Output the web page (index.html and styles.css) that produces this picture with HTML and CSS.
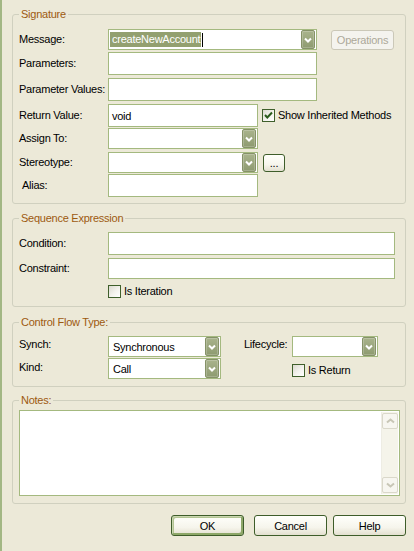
FILE: index.html
```html
<!DOCTYPE html>
<html>
<head>
<meta charset="utf-8">
<title>Message Properties</title>
<link rel="stylesheet" href="styles.css">
</head>
<body>
<div class="dialog">
  <fieldset class="group sig">
    <legend>Signature</legend>
    <div class="row">
      <span class="lbl">Message:</span>
      <div class="combo w-long"><span class="combo-text"><span class="sel">createNewAccount</span><span class="caret"></span></span><span class="ddbtn"><svg width="8" height="6" viewBox="0 0 8 6"><polyline points="1,1.5 4,4.5 7,1.5" fill="none" stroke="#fff" stroke-width="2"/></svg></span></div>
      <button class="btn btn-disabled ops">Operations</button>
    </div>
    <div class="row mt2">
      <span class="lbl">Parameters:</span>
      <div class="field w-long"></div>
    </div>
    <div class="row mt3">
      <span class="lbl">Parameter Values:</span>
      <div class="field w-long"></div>
    </div>
    <div class="row mt3">
      <span class="lbl">Return Value:</span>
      <div class="field w-mid"><span class="val">void</span></div>
      <span class="check inherit"><span class="box checked"><svg width="11" height="11" viewBox="0 0 11 11"><polyline points="2,5 4.3,7.5 9,2.5" fill="none" stroke="#2b5b1c" stroke-width="2"/></svg></span><span class="check-text">Show Inherited Methods</span></span>
    </div>
    <div class="row mt1">
      <span class="lbl">Assign To:</span>
      <div class="combo w-mid"><span class="combo-text"></span><span class="ddbtn"><svg width="8" height="6" viewBox="0 0 8 6"><polyline points="1,1.5 4,4.5 7,1.5" fill="none" stroke="#fff" stroke-width="2"/></svg></span></div>
    </div>
    <div class="row mt3">
      <span class="lbl">Stereotype:</span>
      <div class="combo w-mid"><span class="combo-text"></span><span class="ddbtn"><svg width="8" height="6" viewBox="0 0 8 6"><polyline points="1,1.5 4,4.5 7,1.5" fill="none" stroke="#fff" stroke-width="2"/></svg></span></div>
      <button class="btn dots">...</button>
    </div>
    <div class="row mt1">
      <span class="lbl lbl-indent">Alias:</span>
      <div class="field w-mid"></div>
    </div>
  </fieldset>

  <fieldset class="group seq">
    <legend>Sequence Expression</legend>
    <div class="row">
      <span class="lbl">Condition:</span>
      <div class="field w-full"></div>
    </div>
    <div class="row mt3">
      <span class="lbl">Constraint:</span>
      <div class="field w-full h21"></div>
    </div>
    <div class="row mt6">
      <span class="lbl"></span>
      <span class="check"><span class="box"></span><span class="check-text">Is Iteration</span></span>
    </div>
  </fieldset>

  <fieldset class="group flow">
    <legend>Control Flow Type:</legend>
    <div class="row row-top">
      <span class="lbl lbl-high">Synch:</span>
      <div class="combo w-short"><span class="combo-text"><span class="val">Synchronous</span></span><span class="ddbtn"><svg width="8" height="6" viewBox="0 0 8 6"><polyline points="1,1.5 4,4.5 7,1.5" fill="none" stroke="#fff" stroke-width="2"/></svg></span></div>
      <span class="lbl-life lbl-high">Lifecycle:</span>
      <div class="combo w-life"><span class="combo-text"></span><span class="ddbtn"><svg width="8" height="6" viewBox="0 0 8 6"><polyline points="1,1.5 4,4.5 7,1.5" fill="none" stroke="#fff" stroke-width="2"/></svg></span></div>
    </div>
    <div class="row row-top mt1">
      <span class="lbl lbl-kind">Kind:</span>
      <div class="combo w-short"><span class="combo-text"><span class="val">Call</span></span><span class="ddbtn"><svg width="8" height="6" viewBox="0 0 8 6"><polyline points="1,1.5 4,4.5 7,1.5" fill="none" stroke="#fff" stroke-width="2"/></svg></span></div>
      <span class="check is-return"><span class="box"></span><span class="check-text">Is Return</span></span>
    </div>
  </fieldset>

  <fieldset class="group notes">
    <legend>Notes:</legend>
    <div class="memo">
      <div class="vscroll">
        <span class="sarrow"><svg width="9" height="6" viewBox="0 0 9 6"><polyline points="1,4.5 4.5,1.5 8,4.5" fill="none" stroke="#c8c6b6" stroke-width="2"/></svg></span>
        <span class="sarrow"><svg width="9" height="6" viewBox="0 0 9 6"><polyline points="1,1.5 4.5,4.5 8,1.5" fill="none" stroke="#c8c6b6" stroke-width="2"/></svg></span>
      </div>
    </div>
  </fieldset>

  <div class="buttons">
    <button class="btn btn-default">OK</button>
    <button class="btn btn-cancel">Cancel</button>
    <button class="btn">Help</button>
  </div>
</div>
</body>
</html>
```

FILE: styles.css
```css
* { box-sizing: border-box; }
html, body { margin: 0; padding: 0; }
body {
  width: 414px;
  height: 551px;
  overflow: hidden;
  background: #ece9d8;
  border-left: 2px solid #a3b784;
  font-family: "Liberation Sans", Arial, sans-serif;
  font-size: 11px;
  letter-spacing: -0.25px;
  color: #000;
}
.dialog { padding: 8px 0 0 10px; width: 404px; }

.group {
  margin: 0;
  width: 394px;
  min-width: 0;
  border: 1px solid #d0d0bf;
  border-radius: 3px;
  padding: 8px 9px 6px 6px;
}
.group legend {
  padding: 0 2px;
  line-height: 13px;
  color: #9d5a10;
}
.seq { margin-top: 8px; padding-top: 7px; padding-bottom: 8px; }
.flow { margin-top: 9px; padding-top: 7px; padding-bottom: 7px; }
.notes { margin-top: 7px; padding-top: 3px; padding-bottom: 7px; }

.row { display: flex; align-items: center; }
.row-top { align-items: flex-start; }
.mt1 { margin-top: 1px; }
.mt2 { margin-top: 2px; }
.mt3 { margin-top: 3px; }
.mt6 { margin-top: 6px; }

.lbl { width: 89px; flex: none; white-space: nowrap; line-height: 13px; }
.lbl-indent { padding-left: 3px; }
.lbl-high { margin-top: 2px; }
.lbl-kind { margin-top: 3px; }
.lbl-life { width: 48px; margin-left: 23px; flex: none; line-height: 13px; white-space: nowrap; }

.field {
  height: 23px;
  border: 1px solid #a4b97f;
  background: #fff;
  display: flex;
  align-items: center;
  flex: none;
}
.h21 { height: 21px; }
.val { padding-left: 3px; white-space: nowrap; }

.w-long { width: 209px; }
.w-mid { width: 150px; }
.w-full { width: 287px; }
.w-short { width: 113px; }
.w-life { width: 86px; }

.combo {
  height: 21px;
  border: 1px solid #a4b97f;
  background: #fff;
  display: flex;
  align-items: stretch;
  flex: none;
}
.combo-text { flex: 1; display: flex; align-items: center; min-width: 0; padding-left: 1px; }
.combo-text .val { padding-left: 3px; }
.sel {
  background: #93a070;
  color: #fff;
  line-height: 15px;
  padding: 0 1px 0 2px;
  white-space: nowrap;
}
.caret { width: 1px; height: 14px; background: #000; margin-left: 1px; }
.ddbtn {
  width: 14px;
  flex: none;
  margin-right: 1px;
  border: 1px solid #869268;
  border-radius: 2px;
  background: linear-gradient(#a9b38c, #8e9b70);
  box-shadow: inset 0 0 0 1px rgba(255,255,255,0.2);
  display: flex;
  align-items: center;
  justify-content: center;
}

.check { display: flex; align-items: center; white-space: nowrap; }
.box {
  width: 13px;
  height: 13px;
  flex: none;
  border: 1px solid #3f5f2b;
  background: linear-gradient(135deg, #dcdad0, #f4f3ee 55%, #fff);
  display: flex;
}
.check-text { margin-left: 3px; line-height: 13px; }
.inherit { margin-left: 4px; }
.is-return { margin-left: 71px; margin-top: 6px; }

.btn {
  font: inherit;
  letter-spacing: inherit;
  color: #000;
  height: 21px;
  width: 73px;
  padding: 0;
  border: 1px solid #3e5d2a;
  border-radius: 3px;
  background: linear-gradient(#fffffb, #f6f5ec 60%, #e3e0d0);
  text-align: center;
}
.btn-default {
  box-shadow: inset 1px 1px 0 #c9d6af, inset -2px -2px 0 #8da768, inset 2px 2px 0 #b3c593;
}
.btn-cancel { margin-left: 10px; margin-right: 6px; }
.btn-disabled {
  border-color: #cbc8b8;
  background: #f4f3ee;
  color: #aca899;
}
.ops { width: 63px; height: 20px; margin-left: 14px; }
.dots { width: 22px; height: 18px; margin-left: 5px; line-height: 12px; }

.memo {
  width: 381px;
  height: 86px;
  border: 1px solid #a4b97f;
  background: #fff;
  display: flex;
  justify-content: flex-end;
  padding: 1px;
}
.vscroll {
  width: 17px;
  background: #f5f4ea;
  border-left: 1px solid #eeede4;
  display: flex;
  flex-direction: column;
  justify-content: space-between;
  padding: 1px 0 1px 0;
}
.sarrow {
  height: 16px;
  border: 1px solid #dad8ca;
  border-radius: 2px;
  background: #f7f6f0;
  display: flex;
  align-items: center;
  justify-content: center;
}

.buttons {
  display: flex;
  justify-content: flex-end;
  width: 394px;
  margin-top: 11px;
}
```
